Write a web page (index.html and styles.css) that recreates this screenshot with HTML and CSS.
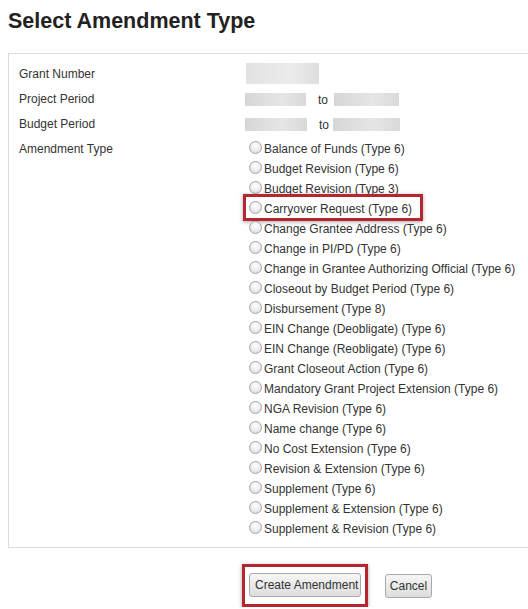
FILE: index.html
```html
<!DOCTYPE html>
<html>
<head>
<meta charset="utf-8">
<link rel="stylesheet" href="styles.css">
</head>
<body>
<h1 class="title">Select Amendment Type</h1>
<div class="panel">
  <div class="grid">
    <div class="label">Grant Number</div>
    <div class="value"><span class="blur blur-grant"></span></div>

    <div class="label">Project Period</div>
    <div class="value"><span class="blur b1"></span><span class="to">to</span><span class="blur b2"></span></div>

    <div class="label">Budget Period</div>
    <div class="value"><span class="blur b1b"></span><span class="to">to</span><span class="blur b2b"></span></div>

    <div class="label label-type">Amendment Type</div>
    <div class="options">
      <label class="opt"><span class="radio"></span>Balance of Funds (Type 6)</label>
      <label class="opt"><span class="radio"></span>Budget Revision (Type 6)</label>
      <label class="opt"><span class="radio"></span>Budget Revision (Type 3)</label>
      <label class="opt opt-hl"><span class="radio"></span>Carryover Request (Type 6)</label>
      <label class="opt"><span class="radio"></span>Change Grantee Address (Type 6)</label>
      <label class="opt"><span class="radio"></span>Change in PI/PD (Type 6)</label>
      <label class="opt"><span class="radio"></span>Change in Grantee Authorizing Official (Type 6)</label>
      <label class="opt"><span class="radio"></span>Closeout by Budget Period (Type 6)</label>
      <label class="opt"><span class="radio"></span>Disbursement (Type 8)</label>
      <label class="opt"><span class="radio"></span>EIN Change (Deobligate) (Type 6)</label>
      <label class="opt"><span class="radio"></span>EIN Change (Reobligate) (Type 6)</label>
      <label class="opt"><span class="radio"></span>Grant Closeout Action (Type 6)</label>
      <label class="opt"><span class="radio"></span>Mandatory Grant Project Extension (Type 6)</label>
      <label class="opt"><span class="radio"></span>NGA Revision (Type 6)</label>
      <label class="opt"><span class="radio"></span>Name change (Type 6)</label>
      <label class="opt"><span class="radio"></span>No Cost Extension (Type 6)</label>
      <label class="opt"><span class="radio"></span>Revision &amp; Extension (Type 6)</label>
      <label class="opt"><span class="radio"></span>Supplement (Type 6)</label>
      <label class="opt"><span class="radio"></span>Supplement &amp; Extension (Type 6)</label>
      <label class="opt"><span class="radio"></span>Supplement &amp; Revision (Type 6)</label>
    </div>
  </div>
</div>
<div class="actions">
  <div class="hl-btn"><button class="btn">Create Amendment</button></div>
  <button class="btn btn-cancel">Cancel</button>
</div>
</body>
</html>
```

FILE: styles.css
```css
html, body {
  margin: 0;
  padding: 0;
  overflow: hidden;
  background: #fff;
}
body {
  padding: 0 8px;
  font-family: "Liberation Sans", Arial, sans-serif;
  color: #333;
}
.title {
  margin: 8px 0 19px;
  font-size: 21.5px;
  line-height: 26px;
  font-weight: bold;
  color: #222;
}
.panel {
  border: 1px solid #dcdcdc;
  border-right: 0;
  margin-right: -8px;
  padding: 8px 0 8px 10px;
}
.grid {
  display: grid;
  grid-template-columns: 226px 1fr;
  font-size: 12px;
}
.label {
  line-height: 25px;
  height: 25px;
}
.value {
  display: flex;
  align-items: center;
  height: 25px;
}
.blur {
  display: inline-block;
  height: 13px;
  background: linear-gradient(90deg, #d6d6d6, #e6e6e6 60%, #d9d9d9);
}
.blur-grant {
  width: 73px;
  height: 21px;
  margin-left: 1px;
  margin-top: -2px;
  background: linear-gradient(90deg, #e2e2e2, #ececec 60%, #dedede);
}
.b1 { width: 61px; }
.b2 { width: 65px; }
.b1b { width: 62px; }
.b2b { width: 67px; margin-left: -2px; }
.to {
  margin-left: 12px;
  width: 16px;
  color: #333;
}
.label-type {
  margin-top: 2px;
  line-height: 20px;
}
.options {
  margin-top: 2px;
  display: flex;
  flex-direction: column;
}
.opt {
  display: flex;
  align-items: center;
  height: 20px;
  line-height: 20px;
  white-space: nowrap;
  position: relative;
}
.radio {
  width: 11px;
  height: 11px;
  border: 1px solid #a6a6a6;
  border-radius: 50%;
  background: radial-gradient(circle at 50% 35%, #ffffff 0%, #f0f0f0 45%, #d4d4d4 100%);
  margin: -4px 2px 0 4px;
  flex: none;
}
.opt-hl::after {
  content: "";
  position: absolute;
  left: -2px;
  top: -5px;
  width: 174px;
  height: 21px;
  border: 3px solid #b5262e;
  box-shadow: 0 1px 4px rgba(0, 0, 0, 0.35);
  pointer-events: none;
}
.actions {
  display: flex;
  align-items: center;
  margin-top: 16px;
  padding-left: 234px;
}
.hl-btn {
  border: 3px solid #b5262e;
  padding: 6px 4px 7px 4px;
  box-shadow: 0 1px 4px rgba(0, 0, 0, 0.35);
}
.btn {
  display: block;
  height: 24px;
  padding: 0 5px;
  white-space: nowrap;
  font-family: "Liberation Sans", Arial, sans-serif;
  font-size: 12px;
  color: #333;
  background: linear-gradient(#f6f6f6, #dddddd);
  border: 1px solid #a9a9a9;
  border-radius: 3px;
}
.hl-btn .btn {
  width: 112px;
}
.btn-cancel {
  margin-left: 17px;
  width: 47px;
  padding: 0;
}
```
